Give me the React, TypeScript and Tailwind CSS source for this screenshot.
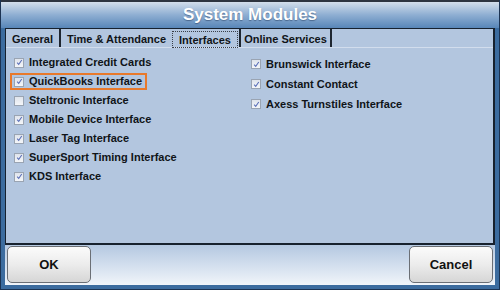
import React from "react";

type Item = { label: string; checked: boolean; highlight?: boolean };

const leftItems: Item[] = [
    { label: "Integrated Credit Cards", checked: true },
    { label: "QuickBooks Interface", checked: true, highlight: true },
    { label: "Steltronic Interface", checked: false },
    { label: "Mobile Device Interface", checked: true },
    { label: "Laser Tag Interface", checked: true },
    { label: "SuperSport Timing Interface", checked: true },
    { label: "KDS Interface", checked: true },
];

const rightItems: Item[] = [
    { label: "Brunswick Interface", checked: true },
    { label: "Constant Contact", checked: true },
    { label: "Axess Turnstiles Interface", checked: true },
];

function CheckBox({ checked }: { checked: boolean }) {
    return (
        <span className="flex h-[10px] w-[10px] shrink-0 items-center justify-center border border-[#9aa4b2] bg-gradient-to-b from-[#dfe4ec] to-[#f4f6f9]">
            {checked && (
                <svg viewBox="0 0 8 8" className="h-[7px] w-[7px]">
                    <path d="M1.3 4.2 L3.1 6.2 L6.6 1.2" fill="none" stroke="#5a6fb8" strokeWidth="1.2" />
                </svg>
            )}
        </span>
    );
}

function Row({ item, tall }: { item: Item; tall?: boolean }) {
    return (
        <div className={`flex items-center ${tall ? "h-[20px]" : "h-[19px]"}`}>
            <div
                className={`flex h-[17px] items-center gap-[5px] border-2 pl-[2px] pr-[3px] ${
                    item.highlight ? "border-[#e8792b]" : "border-transparent"
                }`}
            >
                <CheckBox checked={item.checked} />
                <span className="text-[11px] font-bold leading-none text-[#101418]">{item.label}</span>
            </div>
        </div>
    );
}

export default function App() {
    return (
        <div
            className="flex h-[290px] w-[500px] flex-col overflow-hidden border-x border-b border-[#1c3352] bg-[#3c6c9f]"
            style={{ fontFamily: '"Liberation Sans", Arial, sans-serif' }}
        >
            {/* Title bar */}
            <div className="flex h-[28px] shrink-0 items-center justify-center border-t-2 border-[#2d3440] bg-gradient-to-b from-[#d3deeb] via-[#8eaed2] to-[#5886b8] pb-[1px]">
                <span className="text-[17px] font-bold leading-none text-white [text-shadow:0_1px_1px_rgba(20,40,70,0.45)]">
                    System Modules
                </span>
            </div>

            {/* Tab panel */}
            <div className="mx-[4px] flex flex-1 flex-col border border-r-2 border-b-2 border-[#17212e] bg-[#b3c6df]">
                <div className="flex h-[19px] items-stretch border-b border-[#d2dded] text-[11px] font-bold leading-none text-[#101418]">
                    <div className="flex w-[53px] items-center justify-center pt-[3px]">General</div>
                    <div className="w-[2px] bg-[#1e2630]" />
                    <div className="flex w-[111px] items-center justify-center pt-[3px]">Time &amp; Attendance</div>
                    <div className="mt-[2px] -mb-[1px] flex w-[66px] items-start justify-center border border-dotted border-[#3a3f48] pt-[3px]">
                        Interfaces
                    </div>
                    <div className="ml-[1px] w-[2px] bg-[#1e2630]" />
                    <div className="flex w-[89px] items-center justify-center pt-[3px]">Online Services</div>
                    <div className="w-[2px] bg-[#1e2630]" />
                </div>

                <div className="flex pl-[4px] pt-[5px]">
                    <div className="flex w-[237px] flex-col">
                        {leftItems.map((item) => (
                            <Row key={item.label} item={item} />
                        ))}
                    </div>
                    <div className="flex flex-col pt-[1px]">
                        {rightItems.map((item) => (
                            <Row key={item.label} item={item} tall />
                        ))}
                    </div>
                </div>
            </div>

            {/* Button bar */}
            <div className="mx-[4px] flex h-[40px] shrink-0 items-start justify-between bg-gradient-to-b from-[#b4c8e1] to-[#f1f5fa] px-[2px] pt-[1px]">
                <button className="h-[37px] w-[84px] rounded-[5px] border border-[#6b6f75] bg-gradient-to-b from-[#fbfbfb] via-[#ececec] to-[#d6d6d6] text-[13px] font-bold text-[#111]">
                    OK
                </button>
                <button className="h-[37px] w-[84px] rounded-[5px] border border-[#6b6f75] bg-gradient-to-b from-[#fbfbfb] via-[#ececec] to-[#d6d6d6] text-[13px] font-bold text-[#111]">
                    Cancel
                </button>
            </div>
            <div className="h-[4px] shrink-0" />
        </div>
    );
}
